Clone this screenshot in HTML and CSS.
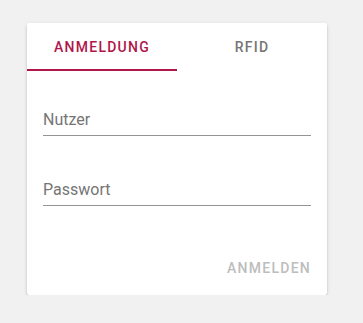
FILE: index.html
```html
<!DOCTYPE html>
<html lang="de">
<head>
<meta charset="utf-8">
<title>Anmeldung</title>
<link rel="stylesheet" href="styles.css">
</head>
<body>
<div class="card">
  <div class="tabs">
    <div class="tab active">ANMELDUNG</div>
    <div class="tab">RFID</div>
  </div>
  <form class="form">
    <div class="field"><span class="label">Nutzer</span></div>
    <div class="field"><span class="label">Passwort</span></div>
  </form>
  <div class="actions">
    <button class="btn" type="button" disabled>ANMELDEN</button>
  </div>
</div>
</body>
</html>
```
FILE: styles.css
```css
html, body {
  margin: 0;
  padding: 0;
  background: #f0f1f0;
  font-family: Roboto, "Liberation Sans", sans-serif;
}
body {
  padding: 23px 0 0 27px;
}
.card {
  width: 300px;
  background: #fff;
  border-radius: 2px;
  box-shadow: 0 2px 2px rgba(0,0,0,0.22), 0 1px 5px rgba(0,0,0,0.08);
}
.tabs {
  display: flex;
  height: 48px;
}
.tab {
  flex: 1;
  display: flex;
  align-items: center;
  justify-content: center;
  font-size: 14px;
  font-weight: 500;
  letter-spacing: 1.25px;
  color: #757575;
  box-sizing: border-box;
  padding-top: 2px;
  border-bottom: 2px solid transparent;
}
.tab.active {
  color: #b0164a;
  border-bottom-color: #b0164a;
}
.form {
  margin: 0;
  padding: 39px 16px 0;
  display: flex;
  flex-direction: column;
  gap: 44px;
}
.field {
  border-bottom: 1px solid #949494;
  padding-bottom: 5px;
}
.label {
  display: block;
  font-size: 16px;
  line-height: 20px;
  color: #757575;
}
.actions {
  display: flex;
  justify-content: flex-end;
  padding: 44px 8px 9px;
}
.btn {
  font-family: Roboto, "Liberation Sans", sans-serif;
  font-size: 14px;
  font-weight: 500;
  letter-spacing: 1.25px;
  color: #bdbdbd;
  background: none;
  border: 0;
  height: 36px;
  padding: 0 8px;
}
```
